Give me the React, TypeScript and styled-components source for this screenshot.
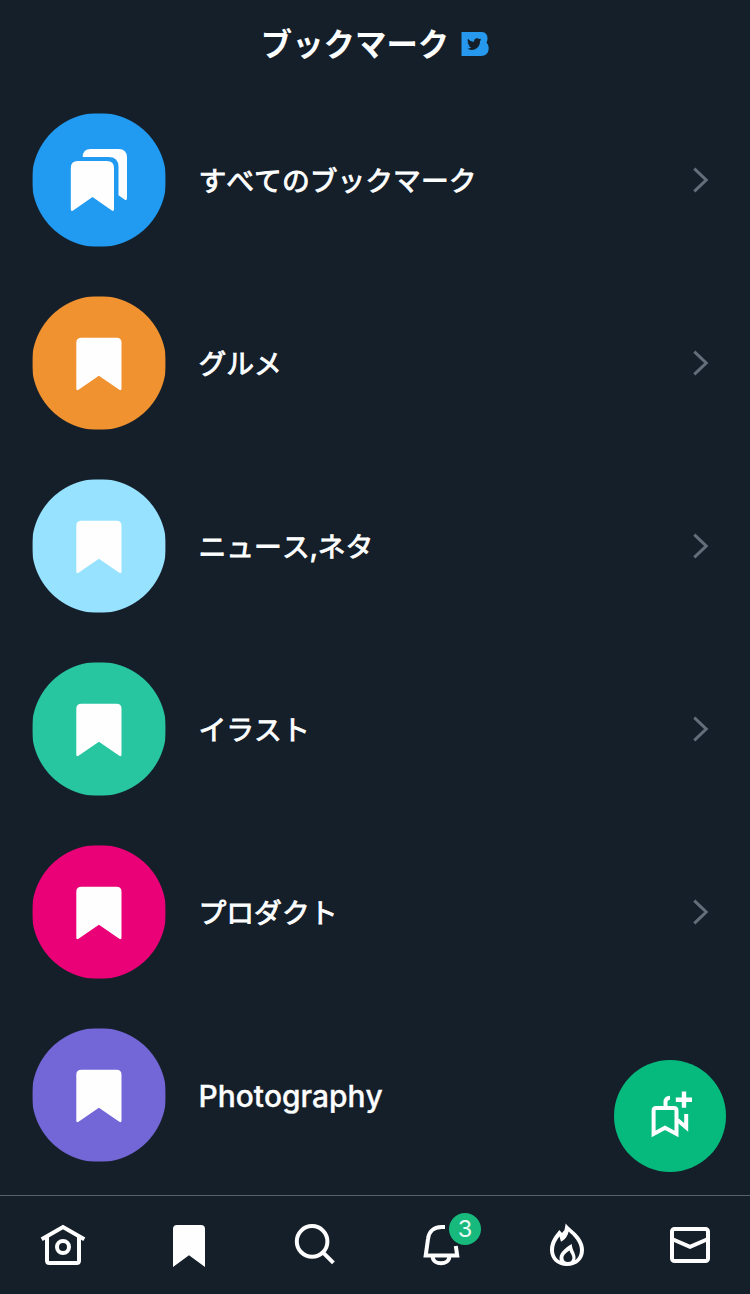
import React from 'react';
import styled, { createGlobalStyle } from 'styled-components';
import { FaTwitter } from 'react-icons/fa';

const GlobalStyle = createGlobalStyle`
  * { box-sizing: border-box; }
  body {
    margin: 0;
    background: #151f2a;
    color: #fdfefe;
    font-family: Inter, "Noto Sans CJK JP", sans-serif;
    font-kerning: none;
  }
`;

const Screen = styled.div`
  position: relative;
  display: flex;
  flex-direction: column;
  height: 1294px;
  width: 750px;
  overflow: hidden;
`;

const Header = styled.header`
  display: flex;
  justify-content: center;
  align-items: center;
  gap: 12px;
  height: 88.5px;
  flex: none;
`;

const Title = styled.h1`
  margin: 1px 0 0;
  font-size: 31.4px;
  line-height: 40px;
  font-weight: 700;
  white-space: nowrap;
`;

const Logo = styled.svg`
  width: 28px;
  height: 24px;
  flex: none;
`;

const List = styled.main`
  flex: 1;
  min-height: 0;
  overflow: hidden;
`;

const Row = styled.a`
  display: flex;
  align-items: center;
  height: 183px;
  padding: 0 40px 0 32px;
`;

const Disc = styled.span<{ $color: string }>`
  width: 134px;
  height: 134px;
  flex: none;
  background: radial-gradient(circle at center, ${p => p.$color} 66.6px, transparent 67.6px);
  clip-path: inset(0.6px);

  svg { display: block; width: 134px; height: 134px; }
`;

const Label = styled.span<{ $latin?: boolean }>`
  flex: 1;
  margin-left: 32.5px;
  font-size: ${p => (p.$latin ? 29.9 : 27.8)}px;
  font-weight: ${p => (p.$latin ? 500 : 400)};
  -webkit-text-stroke: ${p => (p.$latin ? 0.35 : 0.9)}px #fdfefe;
  line-height: 40px;
  padding-top: ${p => (p.$latin ? 2 : 1)}px;
  white-space: nowrap;
`;

const Chevron = styled.svg`
  width: 18px;
  height: 28px;
  flex: none;
`;

const AddButton = styled.button`
  position: absolute;
  left: 614px;
  top: 1060px;
  width: 112px;
  height: 112px;
  padding: 0;
  border: 0;
  border-radius: 50%;
  background: #06ba7d;

  svg { display: block; width: 112px; height: 112px; }
`;

const TabBar = styled.nav`
  display: grid;
  grid-template-columns: repeat(6, 125px);
  height: 99px;
  flex: none;
  border-top: 1px solid #56616c;
  background: #151f2a;
`;

const Tab = styled.a`
  position: relative;
  display: flex;
  justify-content: center;
  padding-top: 19px;

  svg { display: block; width: 60px; height: 60px; }
`;

const Badge = styled.span`
  position: absolute;
  left: 74px;
  top: 17px;
  width: 32px;
  height: 32px;
  border-radius: 50%;
  background: #17b97c;
  color: #e9f8f3;
  font-size: 23.5px;
  font-weight: 400;
  line-height: 32px;
  text-align: center;
`;

const SingleBookmark = () => (
  <svg viewBox="-0.5 -0.5 134 134" fill="#fefefe">
    <path d="M49 41.2H84Q89 41.2 89 46.2V92Q89 94.6 86.8 93.2L66.4 79.2L46 93.2Q43.8 94.6 43.8 92V46.2Q43.8 41.2 49 41.2Z" />
  </svg>
);

const StackedBookmarks = () => (
  <svg viewBox="-0.5 -0.5 134 134" fill="#fefefe">
    <path d="M45.2 47.5H74.5Q81.5 47.5 81.5 54.5V95.5Q81.5 98.5 79 96.8L60 83.5L41 96.8Q38.3 98.5 38.3 95.5V54.5Q38.3 47.5 45.2 47.5Z" />
    <path d="M50.2 43.6Q50.2 35.5 58.2 35.5H86Q94.5 35.5 94.5 44V84.5Q94.5 87.5 92 86L86 81.8V53.5Q86 43.6 76 43.6Z" />
  </svg>
);

const folders = [
  { name: 'すべてのブックマーク', color: '#209bf1', stacked: true },
  { name: 'グルメ', color: '#f19231' },
  { name: 'ニュース,ネタ', color: '#97e2ff' },
  { name: 'イラスト', color: '#28c5a1' },
  { name: 'プロダクト', color: '#eb0177' },
  { name: 'Photography', color: '#7366d6', latin: true },
];

const stroke = { fill: 'none', stroke: '#fefefe', strokeWidth: 4 };

export default function App() {
  return (
    <Screen>
      <GlobalStyle />
      <Header>
        <Title>ブックマーク</Title>
        <Logo viewBox="0 0 28 24">
          <path d="M0.5 0H21Q26.5 0.5 26.5 6.5Q26.5 8.5 25.5 10.5Q28 13 27.6 17.5Q27 24 20 24H0.5Z" fill="#2698ee" />
          <FaTwitter x={6} y={4.8} size={14.5} color="#151f2a" />
        </Logo>
      </Header>
      <List>
        {folders.map(f => (
          <Row key={f.name}>
            <Disc $color={f.color}>{f.stacked ? <StackedBookmarks /> : <SingleBookmark />}</Disc>
            <Label $latin={f.latin}>{f.name}</Label>
            <Chevron viewBox="0 0 18 28">
              <path d="M2.3 2.6L14.2 14L2.3 25.4" fill="none" stroke="#636e7a" strokeWidth="3" />
            </Chevron>
          </Row>
        ))}
      </List>
      <TabBar>
        <Tab>
          <svg viewBox="0.5 0 60 60" {...stroke}>
            <path d="M9.2 24.3L30.5 12L51.8 24.3" />
            <path d="M14.5 22V45.5Q14.5 48 17 48H44Q46.5 48 46.5 45.5V22" />
            <circle cx="30.5" cy="32" r="6" />
          </svg>
        </Tab>
        <Tab>
          <svg viewBox="0.5 0 60 60" fill="#fefefe">
            <path d="M19.5 10H43.5Q47.5 10 47.5 14V52L31.5 40.3L15.5 52V14Q15.5 10 19.5 10Z" />
          </svg>
        </Tab>
        <Tab>
          <svg viewBox="0 0 60 60" {...stroke}>
            <circle cx="29.1" cy="26.4" r="15.3" />
            <path d="M39.9 37.3L50.4 47.8" />
          </svg>
        </Tab>
        <Tab>
          <svg viewBox="0.5 0 60 60" {...stroke}>
            <path d="M37.5 12H34C26 12 21.2 17 20.5 24L18.2 40.5H49.7L48.3 31" />
            <path d="M25.3 42C25.3 50.3 41.7 50.3 41.7 42" />
          </svg>
          <Badge>3</Badge>
        </Tab>
        <Tab>
          <svg viewBox="0.5 0 60 60" fill="#fefefe" fillRule="evenodd">
            <path d="M33.2 8.5C36 12 39 14.2 42 17C47 21.5 51.5 28 51.5 35C51.5 44.5 44.5 51 34.5 51C24.5 51 17.5 44 17.5 35C17.5 27 21.5 21.5 26.8 15L29.5 18L32 15Z M36 16.5C41 20.5 47.5 27.5 47.5 35C47.5 39.5 45.8 43 42.7 45.3C44.5 39.5 39.7 36 39.2 29C32.5 33 25.5 38.5 27.3 45.7C23.5 43.5 21.5 39.5 21.5 35C21.5 30 23.5 26 27 21.5L28.5 26.7C32 25 35.5 21 36 16.5Z M37 35.5C38 38.5 40.3 40.8 39.9 43.5C39.5 46 38 47 35.5 47C32.5 47 30.9 45.5 30.9 42.7C30.9 39.8 34 37.5 37 35.5Z" />
          </svg>
        </Tab>
        <Tab>
          <svg viewBox="0.5 0 60 60" {...stroke}>
            <rect x="14.5" y="14" width="36" height="32" rx="2.5" />
            <path d="M14.5 24L32.5 31.8L50.5 24" />
          </svg>
        </Tab>
      </TabBar>
      <AddButton aria-label="フォルダを追加">
        <svg viewBox="0 0 112 112" {...stroke}>
          <path d="M39.6 74V50.5Q39.6 48 42.1 48H60Q62.5 48 62.5 50.5V74L51 67.8Z" />
          <path d="M51.5 46V42.5Q51.5 37.8 56 37.8" />
          <path d="M63.5 60L72.2 67.5V54" />
          <path d="M61.8 39.7H78M70 31.6V47.8" strokeWidth="4.4" />
        </svg>
      </AddButton>
    </Screen>
  );
}
